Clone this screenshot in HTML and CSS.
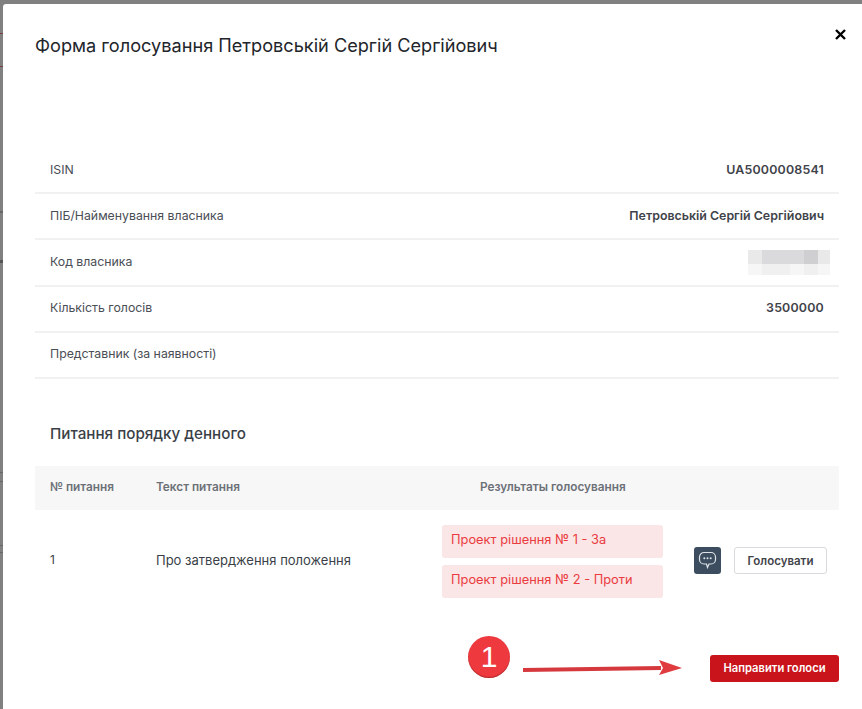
FILE: index.html
```html
<!DOCTYPE html>
<html lang="uk">
<head>
  <meta charset="UTF-8" />
  <meta name="viewport" content="width=device-width, initial-scale=1.0" />
  <title>Форма голосування</title>
  <link rel="stylesheet" href="styles.css">
</head>
<body>
  <div class="modal">
    <div class="modal-head">
      <h1>Форма голосування Петровській Сергій Сергійович</h1>
      <button class="close" aria-label="Закрити">
        <svg width="11" height="11" viewBox="0 0 11 11"><path d="M1 1l9 9M10 1l-9 9" stroke="#000" stroke-width="2.4" fill="none"/></svg>
      </button>
    </div>

    <div class="info">
      <div class="info-row"><span>ISIN</span><b class="num">UA5000008541</b></div>
      <div class="info-row"><span>ПІБ/Найменування власника</span><b>Петровській Сергій Сергійович</b></div>
      <div class="info-row"><span>Код власника</span>
        <div class="blur">
          <i class="b1"></i><i class="b2"></i><i class="b2"></i><i class="b2"></i><i class="b3"></i><i class="b1"></i>
          <i class="b4"></i><i class="b5"></i><i class="b5"></i><i class="b4"></i><i class="b5"></i><i class="b4"></i>
        </div>
      </div>
      <div class="info-row"><span>Кількість голосів</span><b class="num">3500000</b></div>
      <div class="info-row"><span>Представник (за наявності)</span></div>
    </div>

    <h2>Питання порядку денного</h2>

    <div class="table-head">
      <div class="col-num">№ питання</div>
      <div class="col-text">Текст питання</div>
      <div class="col-res">Результаты голосування</div>
    </div>
    <div class="table-row">
      <div class="col-num">1</div>
      <div class="col-text">Про затвердження положення</div>
      <div class="results">
        <div class="result">Проект рішення № 1 - За</div>
        <div class="result">Проект рішення № 2 - Проти</div>
      </div>
      <div class="actions">
        <span class="comment">
          <svg width="19" height="19" viewBox="0 0 19 19" fill="none"><path d="M6 1.500h7a4.500 4.500 0 0 1 4.500 4.500v2.500a4.500 4.500 0 0 1-4.500 4.500h-2l-1.500 3.500-1-3.500H6a4.500 4.500 0 0 1-4.500-4.500V6A4.500 4.500 0 0 1 6 1.500z" stroke="#dfe4e9" stroke-width="1.200"/><circle cx="6.300" cy="7.300" r="1" fill="#dfe4e9"/><circle cx="9.500" cy="7.300" r="1" fill="#dfe4e9"/><circle cx="12.700" cy="7.300" r="1" fill="#dfe4e9"/></svg>
        </span>
        <button class="vote">Голосувати</button>
      </div>
    </div>

    <div class="footer">
      <span class="step">1</span>
      <svg class="arrow" width="160" height="20" viewBox="0 0 160 20"><path d="M0 10L138 8 138 12 0 14z" fill="#d6393d"/><path d="M136 2l23 8-23 7 4-7z" fill="#e03c40"/></svg>
      <button class="send">Направити голоси</button>
    </div>
  </div>
</body>
</html>
```

FILE: styles.css
```css
* {
  box-sizing: border-box;
}
body {
  margin: 0;
  height: 709px;
  overflow: hidden;
  padding: 4px 0 0 3px;
  font-family: Inter, "Noto Sans", sans-serif;
  color: #3a3f47;
  /* край сторінки за модальним вікном */
  background:
    linear-gradient(#7c3d3f, #7c3d3f) 0 33px / 3px 1px no-repeat,
    linear-gradient(#7c3d3f, #7c3d3f) 0 66px / 3px 1px no-repeat,
    linear-gradient(#666, #666) 0 211px / 3px 2px no-repeat,
    linear-gradient(#555, #555) 0 260px / 3px 3px no-repeat,
    linear-gradient(#666, #666) 0 472px / 3px 1px no-repeat,
    linear-gradient(#666, #666) 0 481px / 3px 1px no-repeat,
    linear-gradient(#666, #666) 0 545px / 3px 1px no-repeat,
    linear-gradient(#666, #666) 0 552px / 3px 1px no-repeat,
    #808080;
}
.modal {
  height: 705px;
  background: #fff;
  padding: 0 23px 0 32px;
  border-radius: 3px 0 0 0;
}
.modal-head {
  display: flex;
  justify-content: space-between;
  height: 144px;
  padding-top: 29px;
}
h1 {
  margin: 0;
  font-size: 18.15px;
  line-height: 24px;
  font-weight: 400;
  color: #22252a;
}
.close {
  border: none;
  background: none;
  padding: 0;
  margin: -5px -7px 0 0;
  height: 11px;
  width: 11px;
}
.info-row {
  display: flex;
  justify-content: space-between;
  align-items: center;
  height: 46.2px;
  padding: 0 15px 2px;
  border-bottom: 2px solid #f1f1f1;
  font-size: 12.3px;
  color: #4a4e55;
}
.info-row b {
  font-weight: 600;
  font-size: 12.4px;
  color: #3f434a;
}
.info-row .num {
  letter-spacing: .2px;
}
.blur {
  display: grid;
  grid-template-columns: 14px 14px 14px 14px 14px 12px;
  grid-template-rows: 14px 11px;
  margin: 2px -6px 0 0;
}
.blur i {
  display: block;
}
.b1 { background: #e9e9ea; }
.b2 { background: #dadadc; }
.b3 { background: #cfcfd1; }
.b4 { background: #f6f6f7; }
.b5 { background: #f0f0f1; }
h2 {
  margin: 44px 0 0;
  padding-left: 15px;
  font-size: 15.2px;
  line-height: 22px;
  font-weight: 500;
  color: #3a3f47;
}
.table-head {
  display: flex;
  align-items: center;
  height: 44px;
  margin-top: 21px;
  padding-bottom: 1px;
  background: #f7f7f7;
  font-size: 11.8px;
  font-weight: 600;
  color: #6c7077;
}
.col-num {
  width: 121px;
  padding-left: 15px;
}
.col-text {
  width: 286px;
}
.col-res {
  flex: 1;
}
.table-head .col-text {
  width: 324px;
}
.table-row {
  display: flex;
  align-items: center;
  height: 102px;
  font-size: 13px;
  color: #3a3f47;
}
.table-row .col-num {
  font-size: 12px;
}
.table-row .col-num,
.table-row .col-text {
  margin-bottom: 2px;
}
.results {
  width: 221px;
  display: flex;
  flex-direction: column;
  gap: 7px;
  margin-top: 2px;
}
.result {
  height: 33px;
  line-height: 29px;
  padding-left: 9px;
  background: #fae6e6;
  border-radius: 3px;
  color: #ea3b40;
  font-size: 12.85px;
}
.actions {
  display: flex;
  align-items: center;
  gap: 13px;
  margin-left: 31px;
}
.comment {
  display: flex;
  align-items: center;
  justify-content: center;
  width: 27px;
  height: 27px;
  background: #3b4d5e;
  border-radius: 3px;
}
.vote {
  width: 93px;
  height: 27px;
  padding: 0;
  background: #fff;
  border: 1px solid #d8dadd;
  border-radius: 3px;
  font: 600 11.5px Inter, "Noto Sans", sans-serif;
  color: #3f434a;
}
.footer {
  display: flex;
  align-items: center;
  justify-content: flex-end;
  margin-top: 43px;
}
.step {
  display: flex;
  align-items: center;
  justify-content: center;
  width: 42px;
  height: 42px;
  margin-top: -23px;
  border-radius: 50%;
  background: #ee3a3e;
  box-shadow: inset 0 -1px 1px rgba(120, 20, 20, .5);
  color: #fff;
  font: 400 30px "Liberation Sans", sans-serif;
}
.arrow {
  margin-left: 13px;
  margin-right: 27px;
  margin-top: -1px;
}
.send {
  width: 129px;
  height: 27px;
  padding: 0;
  background: #c8141a;
  border: none;
  border-radius: 3px;
  font: 600 11.2px Inter, "Noto Sans", sans-serif;
  color: #fff;
}
```
